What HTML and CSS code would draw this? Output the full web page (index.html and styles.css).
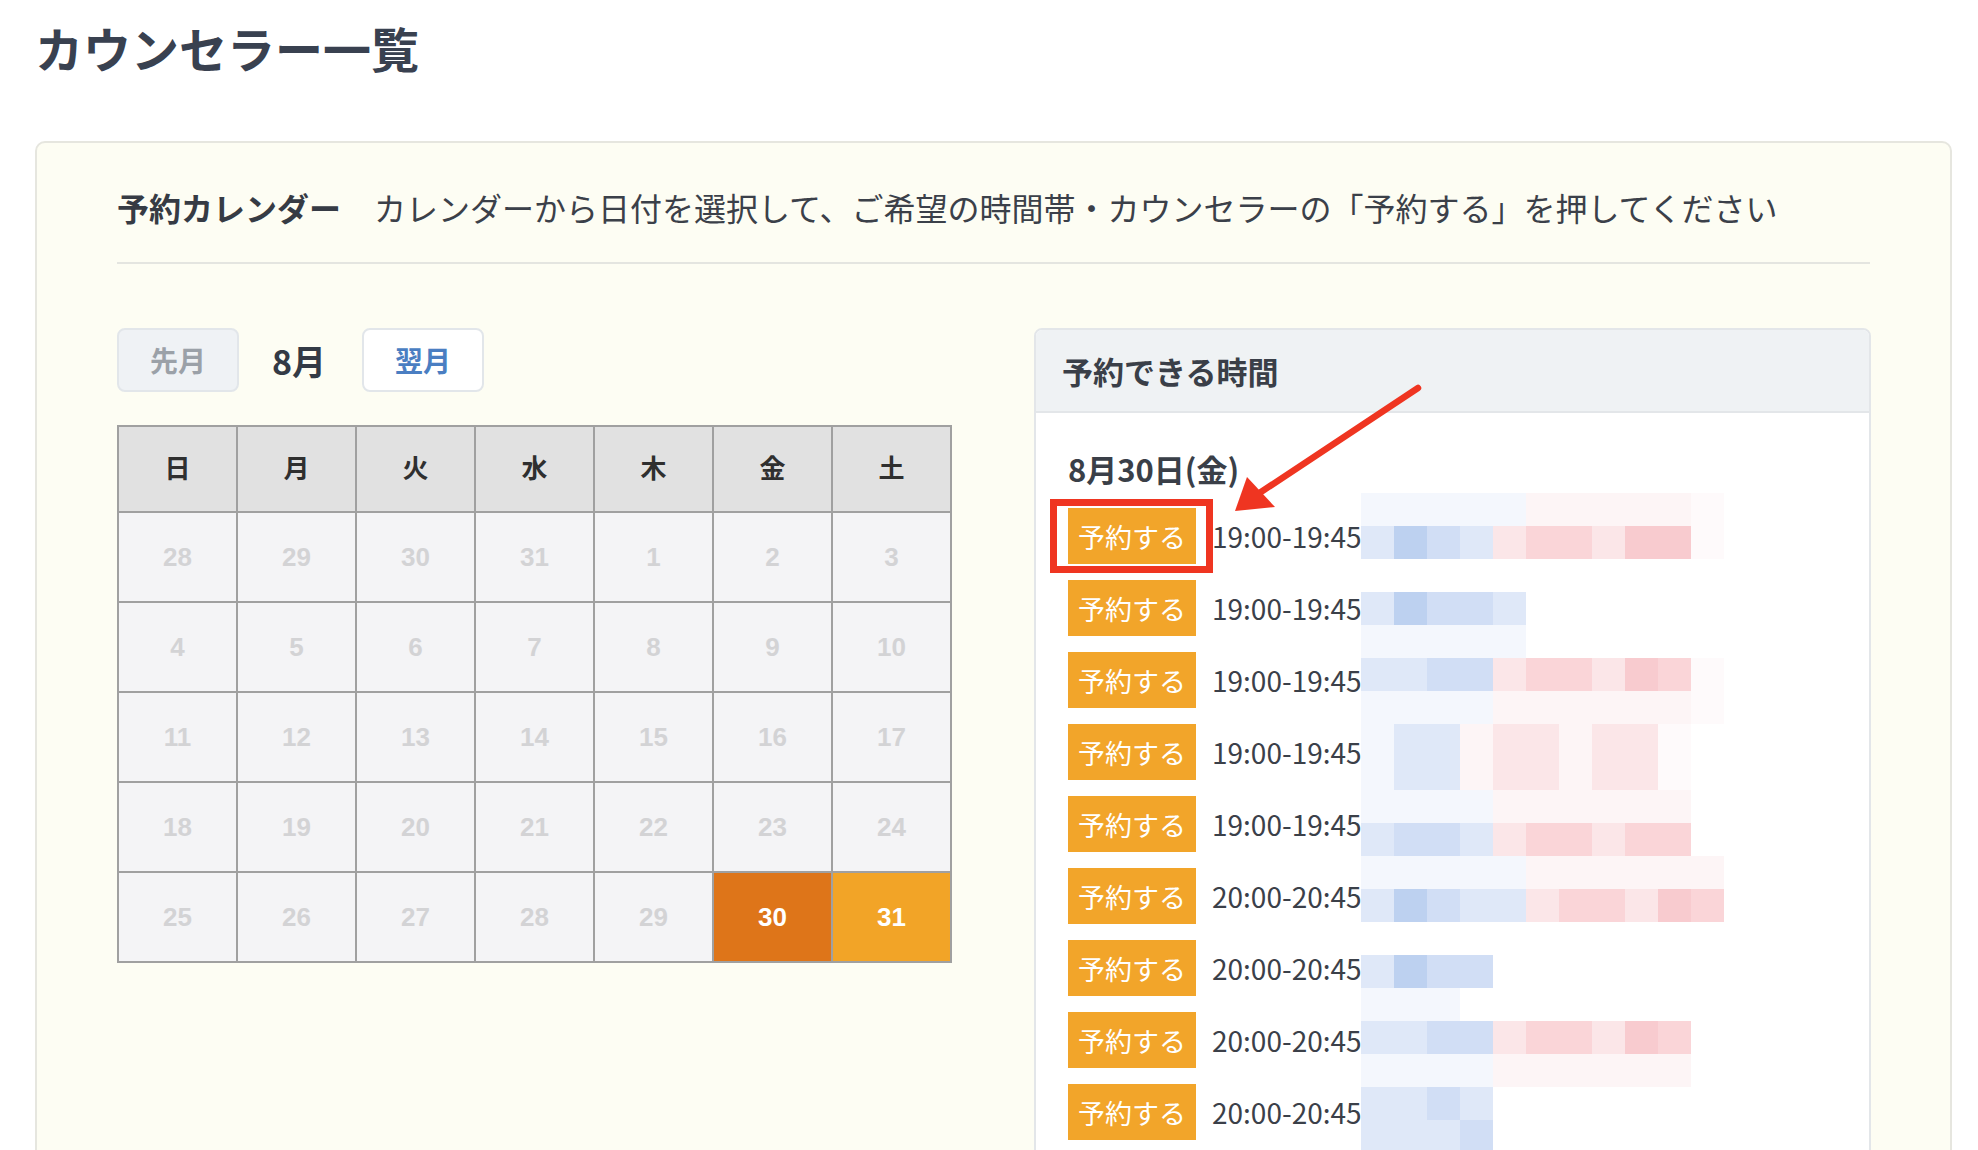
FILE: index.html
```html
<!DOCTYPE html>
<html lang="ja">
  <head>
    <meta charset="UTF-8" />
    <meta name="viewport" content="width=device-width, initial-scale=1.0" />
    <title>カウンセラー一覧</title>
    <link rel="stylesheet" href="styles.css">
  </head>
  <body>
    <h1 class="page-title">カウンセラー一覧</h1>

    <section class="booking-card">
      <div class="booking-head">
        <span class="booking-label">予約カレンダー</span>
        <span class="booking-note">カレンダーから日付を選択して、ご希望の時間帯・カウンセラーの「予約する」を押してください</span>
      </div>

      <div class="booking-body">
        <!-- カレンダー -->
        <div class="calendar">
          <div class="month-nav">
            <button class="month-btn disabled">先月</button>
            <span class="month-label">8月</span>
            <button class="month-btn">翌月</button>
          </div>

          <table class="calendar-table">
            <thead>
              <tr><th>日</th><th>月</th><th>火</th><th>水</th><th>木</th><th>金</th><th>土</th></tr>
            </thead>
            <tbody>
              <tr><td>28</td><td>29</td><td>30</td><td>31</td><td>1</td><td>2</td><td>3</td></tr>
              <tr><td>4</td><td>5</td><td>6</td><td>7</td><td>8</td><td>9</td><td>10</td></tr>
              <tr><td>11</td><td>12</td><td>13</td><td>14</td><td>15</td><td>16</td><td>17</td></tr>
              <tr><td>18</td><td>19</td><td>20</td><td>21</td><td>22</td><td>23</td><td>24</td></tr>
              <tr><td>25</td><td>26</td><td>27</td><td>28</td><td>29</td><td class="selected">30</td><td class="available">31</td></tr>
            </tbody>
          </table>
        </div>

        <!-- 予約できる時間 -->
        <div class="slots-panel">
          <div class="slots-head">予約できる時間</div>
          <div class="slots-body">
            <div class="slots-date">8月30日(金)</div>
            <ul class="slot-list">
              <li class="slot"><button class="reserve-btn">予約する</button><span class="slot-time">19:00-19:45</span></li>
              <li class="slot"><button class="reserve-btn">予約する</button><span class="slot-time">19:00-19:45</span></li>
              <li class="slot"><button class="reserve-btn">予約する</button><span class="slot-time">19:00-19:45</span></li>
              <li class="slot"><button class="reserve-btn">予約する</button><span class="slot-time">19:00-19:45</span></li>
              <li class="slot"><button class="reserve-btn">予約する</button><span class="slot-time">19:00-19:45</span></li>
              <li class="slot"><button class="reserve-btn">予約する</button><span class="slot-time">20:00-20:45</span></li>
              <li class="slot"><button class="reserve-btn">予約する</button><span class="slot-time">20:00-20:45</span></li>
              <li class="slot"><button class="reserve-btn">予約する</button><span class="slot-time">20:00-20:45</span></li>
              <li class="slot"><button class="reserve-btn">予約する</button><span class="slot-time">20:00-20:45</span></li>
            </ul>
          </div>
        </div>
      </div>
    </section>

    <!-- カウンセラー名のモザイク -->
    <div id="mosaic" class="mosaic"></div>

    <!-- 説明用の矢印と枠 -->
    <svg class="annotation" viewBox="0 0 1978 1150">
      <rect x="1053.5" y="502.5" width="156" height="67" fill="none" stroke="#ef3521" stroke-width="7" />
      <line x1="1418" y1="388" x2="1258" y2="494" stroke="#ef3521" stroke-width="6.5" stroke-linecap="round" />
      <polygon points="1235,511 1247,477 1275,507" fill="#ef3521" />
    </svg>

    <script>
      // モザイクのマス目 (1文字 = 1マス)
      const mosaicRows = [
        "fffffqqqqqw",
        "lbmlrpprPPw",
        "...........",
        "lbmml......",
        "fffff......",
        "llmmrpprPpw",
        "ffffqqqqqqw",
        "fllqrrqrrw.",
        "fllqrrqrrw.",
        "ffffqqqqqq.",
        "lmmlrpprpp.",
        "fffffqqqqqq",
        "lbmllrpprPp",
        "...........",
        "lbmm.......",
        "fff........",
        "llmmrpprPp.",
        "ffffqqqqqq.",
        "llml.......",
        "lllm.......",
      ];

      const names = {
        ".": "px-none", f: "px-f", l: "px-l", m: "px-m", b: "px-b",
        q: "px-q", r: "px-r", p: "px-p", P: "px-pp", w: "px-w",
      };

      const mosaic = document.getElementById("mosaic");
      mosaicRows.forEach((row) => {
        for (const ch of row) {
          const cell = document.createElement("span");
          cell.className = names[ch];
          mosaic.appendChild(cell);
        }
      });
    </script>
  </body>
</html>
```

FILE: styles.css
```css
/* 全体 */
body {
  margin: 0;
  padding: 0 26px 0 35px;
  height: 100vh;
  box-sizing: border-box;
  overflow: hidden;
  background: #fff;
  color: #3b4049;
  font-family: "Noto Sans CJK JP", sans-serif;
}

button {
  font-family: inherit;
  cursor: pointer;
}

.page-title {
  margin: 19px 0 66px;
  font-size: 48px;
  line-height: 56px;
  font-weight: 700;
  color: #394150;
}

/* 予約カード */
.booking-card {
  background: #fdfdf3;
  border: 2px solid #e6e6df;
  border-radius: 10px;
  padding: 0 80px 60px;
  min-height: 1200px;
}

.booking-head {
  display: flex;
  align-items: baseline;
  padding: 42px 0 33px;
  border-bottom: 2px solid #e4e5e0;
  font-size: 32px;
  line-height: 44px;
}

.booking-label {
  font-weight: 700;
  margin-right: 33px;
  color: #363b44;
}

.booking-body {
  display: grid;
  grid-template-columns: 835px 837px;
  column-gap: 82px;
  align-items: start;
  margin-top: 64px;
}

/* 月の切り替え */
.month-nav {
  display: flex;
  align-items: center;
  height: 64px;
  margin-bottom: 33px;
}

.month-btn {
  width: 122px;
  height: 64px;
  padding: 0;
  border: 2px solid #e2e6ea;
  border-radius: 8px;
  background: #fff;
  color: #4a7ec2;
  font-size: 28px;
  font-weight: 700;
}

.month-btn.disabled {
  background: #eff2f5;
  color: #9ba1a8;
}

.month-label {
  margin: 0 36px 0 33px;
  font-size: 34px;
  font-weight: 700;
  color: #333a45;
}

/* カレンダー */
.calendar-table {
  width: 835px;
  table-layout: fixed;
  border-collapse: collapse;
  border: 2px solid #a0a0a0;
}

.calendar-table th,
.calendar-table td {
  border: 2px solid #a0a0a0;
  padding: 0;
  text-align: center;
}

.calendar-table th {
  height: 79px;
  padding-bottom: 5px;
  background: #e1e1e1;
  color: #2f2f2f;
  font-size: 26px;
  font-weight: 700;
}

.calendar-table td {
  height: 88px;
  background: #f4f4f6;
  color: #d3d3d5;
  font-family: "Liberation Sans", Arial, sans-serif;
  font-size: 26px;
  font-weight: 700;
}

.calendar-table td.selected {
  background: #de7519;
  color: #fff;
}

.calendar-table td.available {
  background: #f2a427;
  color: #fff;
}

/* 予約できる時間 */
.slots-panel {
  background: #fff;
  border: 2px solid #e3e6e9;
  border-radius: 8px;
  overflow: hidden;
  min-height: 900px;
}

.slots-head {
  display: flex;
  align-items: center;
  height: 81px;
  padding: 0 26px;
  background: #eff2f4;
  border-bottom: 2px solid #e3e6e9;
  font-size: 31px;
  font-weight: 700;
  color: #3a3f48;
}

.slots-body {
  padding: 34px 32px;
}

.slots-date {
  margin-bottom: 17px;
  font-size: 31px;
  line-height: 44px;
  font-weight: 700;
  color: #3a3f48;
}

.slot-list {
  list-style: none;
  margin: 0;
  padding: 0;
  display: flex;
  flex-direction: column;
  gap: 16px;
}

.slot {
  display: flex;
  align-items: center;
  gap: 16px;
}

.reserve-btn {
  width: 128px;
  height: 56px;
  padding: 0;
  border: none;
  background: #f2a52a;
  color: #fff;
  font-size: 27px;
}

.slot-time {
  font-size: 28px;
  color: #3b4049;
}

/* モザイク */
.mosaic {
  position: absolute;
  left: 1361px;
  top: 493px;
  display: grid;
  grid-template-columns: repeat(11, 33px);
  grid-auto-rows: 33px;
}

.px-none { background: transparent; }
.px-f { background: #f4f7fd; }
.px-l { background: #dfe8f8; }
.px-m { background: #d1def5; }
.px-b { background: #bdd1f0; }
.px-q { background: #fdf5f6; }
.px-r { background: #fbe6e8; }
.px-p { background: #fad5d8; }
.px-pp { background: #f8cbcf; }
.px-w { background: #fefafb; }

/* 注釈 */
.annotation {
  position: absolute;
  left: 0;
  top: 0;
  width: 1978px;
  height: 1150px;
  pointer-events: none;
}
```
